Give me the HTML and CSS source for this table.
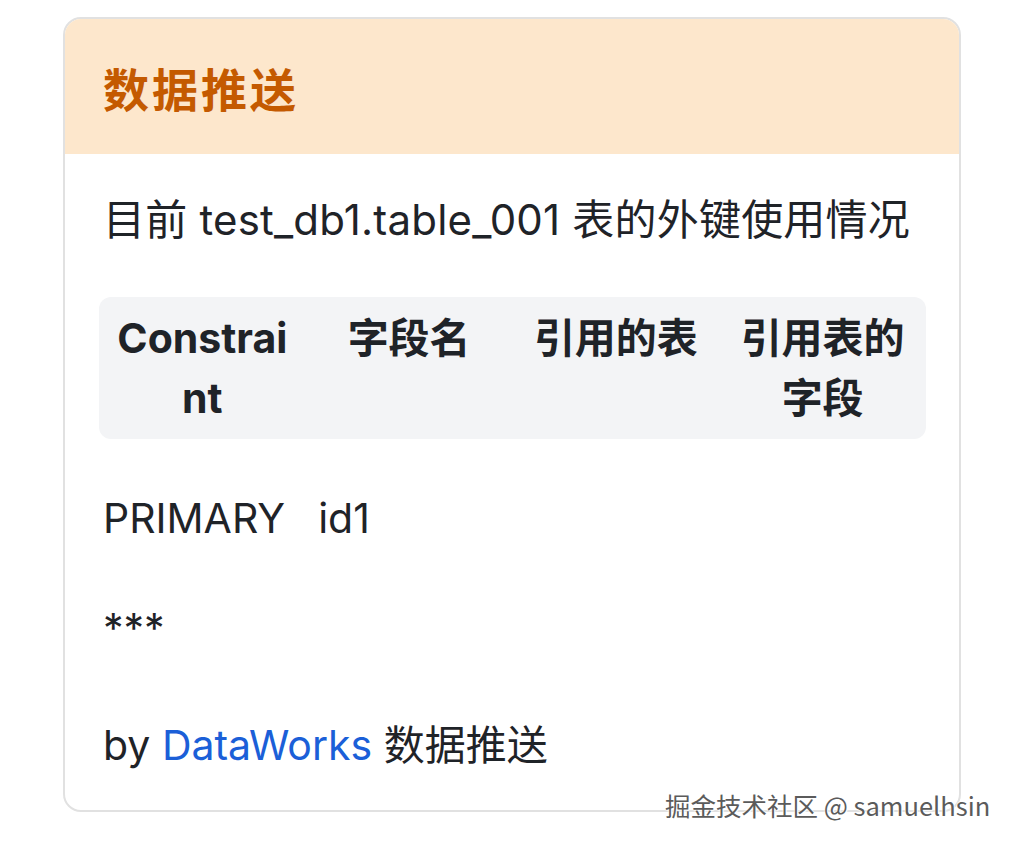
FILE: index.html
```html
<!DOCTYPE html>
<html lang="zh">
<head>
<meta charset="utf-8">
<link rel="stylesheet" href="styles.css">
</head>
<body>
<div class="card">
  <div class="card-head"><h1 class="title">数据推送</h1></div>
  <div class="card-body">
    <p class="intro">目前 test_db1.table_001 表的外键使用情况</p>
    <table class="fk">
      <thead>
        <tr><th>Constraint</th><th>字段名</th><th>引用的表</th><th>引用表的字段</th></tr>
      </thead>
    </table>
    <p class="row">PRIMARY<span class="gap"></span>id1</p>
    <p class="stars">***</p>
    <p class="by">by <a class="link">DataWorks</a> 数据推送</p>
  </div>
</div>
<div class="watermark">掘金技术社区 @ samuelhsin</div>
</body>
</html>
```
FILE: styles.css
```css
html, body {
  margin: 0;
  padding: 0;
  background: #ffffff;
}
body {
  font-family: Inter, "Noto Sans CJK SC", sans-serif;
  color: #1f2328;
  position: relative;
  width: 1011px;
  height: 843px;
  overflow: hidden;
}
.card {
  margin: 17px 0 0 63px;
  width: 898px;
  height: 795px;
  box-sizing: border-box;
  border: 2px solid #e1e1e1;
  border-radius: 18px;
  overflow: hidden;
  display: flex;
  flex-direction: column;
}
.card-head {
  background: #fde7cc;
  height: 135px;
  display: flex;
  align-items: center;
  padding: 0 38px;
  flex: none;
}
.title {
  margin: 0;
  font-family: "Noto Sans CJK SC", sans-serif;
  font-size: 46px;
  font-weight: 700;
  color: #c45a00;
  letter-spacing: 3px;
  line-height: 1;
}
.card-body {
  padding: 36px 32px 0 38px;
  font-size: 41px;
  line-height: 60px;
}
.card-body p {
  margin: 0;
}
.intro {
  font-size: 42px;
  letter-spacing: 0.2px;
}
.fk {
  margin: 47px 0 0 -4px;
  width: 827px;
  border-collapse: separate;
  border-spacing: 0;
  table-layout: fixed;
  background: #f3f4f6;
  border-radius: 12px;
}
.fk th {
  font-size: 41px;
  line-height: 60px;
  font-weight: 700;
  padding: 11px 18px;
  text-align: center;
  vertical-align: top;
  word-break: break-all;
  color: #1f2328;
}
.row {
  margin-top: 49px !important;
}
.gap {
  display: inline-block;
  width: 33px;
}
.stars {
  margin-top: 50px !important;
}
.by {
  margin-top: 57px !important;
}
.link {
  color: #1b5fd8;
  text-decoration: none;
}
.watermark {
  position: absolute;
  left: 665px;
  top: 787px;
  font-family: "Noto Sans CJK SC", sans-serif;
  font-size: 25.5px;
  line-height: 36px;
  color: #5b5b5b;
  text-shadow: 0 0 2px #ffffff, 0 0 2px #ffffff, 1px 1px 1px #ffffff;
  white-space: nowrap;
}
```
